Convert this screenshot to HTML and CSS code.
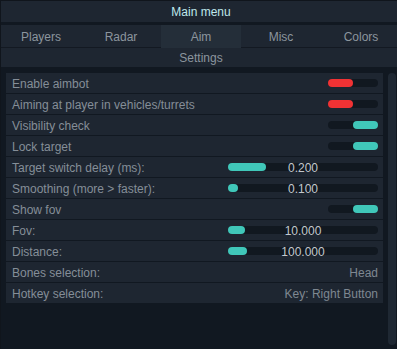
FILE: index.html
```html
<!DOCTYPE html>
<html>
<head>
<meta charset="utf-8">
<link rel="stylesheet" href="styles.css">
</head>
<body>
<div class="window">
  <div class="titlebar">Main menu</div>
  <div class="tabs">
    <div class="tab">Players</div>
    <div class="tab">Radar</div>
    <div class="tab active">Aim</div>
    <div class="tab">Misc</div>
    <div class="tab">Colors</div>
  </div>
  <div class="subtitle">Settings</div>
  <div class="content">
    <div class="list">
      <div class="row"><span class="label">Enable aimbot</span><span class="toggle off"><span class="knob"></span></span></div>
      <div class="row"><span class="label">Aiming at player in vehicles/turrets</span><span class="toggle off"><span class="knob"></span></span></div>
      <div class="row"><span class="label">Visibility check</span><span class="toggle on"><span class="knob"></span></span></div>
      <div class="row"><span class="label">Lock target</span><span class="toggle on"><span class="knob"></span></span></div>
      <div class="row"><span class="label">Target switch delay (ms):</span><span class="slider"><span class="track"><span class="fill" style="width:38px"></span></span><span class="value">0.200</span></span></div>
      <div class="row"><span class="label">Smoothing (more &gt; faster):</span><span class="slider"><span class="track"><span class="fill" style="width:10px"></span></span><span class="value">0.100</span></span></div>
      <div class="row"><span class="label">Show fov</span><span class="toggle on"><span class="knob"></span></span></div>
      <div class="row"><span class="label">Fov:</span><span class="slider"><span class="track"><span class="fill" style="width:17px"></span></span><span class="value">10.000</span></span></div>
      <div class="row"><span class="label">Distance:</span><span class="slider"><span class="track"><span class="fill" style="width:19px"></span></span><span class="value">100.000</span></span></div>
      <div class="row"><span class="label">Bones selection:</span><span class="choice">Head</span></div>
      <div class="row"><span class="label">Hotkey selection:</span><span class="choice">Key: Right Button</span></div>
    </div>
    <div class="scrollbar"></div>
  </div>
</div>
</body>
</html>
```

FILE: styles.css
```css
html, body {
  margin: 0;
  padding: 0;
  background: #10151c;
  overflow: hidden;
}
body {
  font-family: "Liberation Sans", Arial, sans-serif;
  font-size: 12px;
}
.window {
  width: 400px;
  height: 352px;
  border-top: 1px solid #10151c;
  border-left: 1px solid #10151c;
  background: #111821;
  display: flex;
  flex-direction: column;
}
.titlebar {
  height: 21px;
  line-height: 23px;
  text-align: center;
  background: #1e2631;
  color: #bfe8ec;
  margin-bottom: 3px;
}
.tabs {
  display: grid;
  grid-template-columns: repeat(5, 80px);
  height: 22px;
  background: #1e2631;
  border-bottom: 1px solid #131922;
}
.tab {
  line-height: 25px;
  text-align: center;
  color: #8c959e;
}
.tab.active {
  background: #242e39;
}
.subtitle {
  height: 19px;
  line-height: 21px;
  text-align: center;
  background: #1e2631;
  color: #8c959e;
  margin-bottom: 6px;
}
.content {
  display: flex;
  padding-left: 5px;
  gap: 5px;
}
.list {
  width: 377px;
  display: flex;
  flex-direction: column;
  gap: 1px;
}
.row {
  height: 20px;
  background: #1e2631;
  display: flex;
  align-items: center;
  justify-content: space-between;
  padding: 0 5px 0 6px;
}
.label {
  color: #858e98;
  padding-top: 1px;
}
.toggle {
  width: 50px;
  height: 8px;
  border-radius: 4px;
  background: #111820;
  display: flex;
}
.toggle.on {
  justify-content: flex-end;
}
.knob {
  width: 25px;
  height: 8px;
  border-radius: 4px;
}
.toggle.off .knob { background: #f03234; }
.toggle.on .knob { background: #40c7b9; }
.slider {
  display: grid;
  width: 150px;
  align-items: center;
}
.slider > * {
  grid-area: 1 / 1;
}
.track {
  height: 8px;
  border-radius: 4px;
  background: #111820;
  display: flex;
}
.fill {
  height: 8px;
  border-radius: 4px;
  background: #40c7b9;
}
.value {
  text-align: center;
  color: #c3c8cd;
  font-size: 12px;
  line-height: 14px;
  padding-top: 1px;
}
.choice {
  color: #7f8891;
  padding-top: 1px;
}
.scrollbar {
  width: 8px;
  height: 272px;
  border-radius: 4px;
  background: #1f2833;
}
```
